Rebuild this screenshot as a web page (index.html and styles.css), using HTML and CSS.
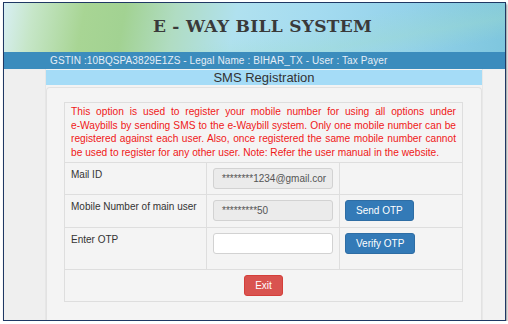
FILE: index.html
```html
<!DOCTYPE html>
<html>
<head>
<meta charset="utf-8">
<link rel="stylesheet" href="styles.css">
</head>
<body>
<div class="frame">
  <header class="banner">
    <h1 class="brand">E - WAY BILL SYSTEM</h1>
  </header>
  <div class="userbar">GSTIN :10BQSPA3829E1ZS - Legal Name : BIHAR_TX - User : Tax Payer</div>
  <div class="page">
    <div class="gutter"></div>
    <main class="content">
      <div class="title">SMS Registration</div>
      <div class="panel">
        <table class="form">
          <tr>
            <td colspan="3" class="notice">This option is used to register your mobile number for using all options under e-&#8288;Waybills by sending SMS to the e-&#8288;Waybill system. Only one mobile number can be registered against each user. Also, once registered the same mobile number cannot be used to register for any other user. Note: Refer the user manual in the website.</td>
          </tr>
          <tr class="r-mail">
            <td class="label">Mail ID</td>
            <td class="field"><div class="input ro">********1234@gmail.cor</div></td>
            <td class="act"></td>
          </tr>
          <tr class="r-mobile">
            <td class="label">Mobile Number of main user</td>
            <td class="field"><div class="input ro">*********50</div></td>
            <td class="act"><span class="btn blue">Send OTP</span></td>
          </tr>
          <tr class="r-otp">
            <td class="label">Enter OTP</td>
            <td class="field"><div class="input"></div></td>
            <td class="act"><span class="btn blue">Verify OTP</span></td>
          </tr>
          <tr class="r-exit">
            <td colspan="3" class="exitcell"><span class="btn red">Exit</span></td>
          </tr>
        </table>
      </div>
    </main>
    <div class="gutter-r"></div>
  </div>
</div>
</body>
</html>
```

FILE: styles.css
```css
* { box-sizing: border-box; }
html, body { margin: 0; padding: 0; background: #ffffff; }
body {
  padding: 2px 0 0 3px;
  font-family: "Liberation Sans", Arial, sans-serif;
}
.frame {
  width: 503px;
  height: 319px;
  border: 1px solid #1f3864;
  box-shadow: 1px 2px 2px rgba(0,0,0,0.45);
  display: flex;
  flex-direction: column;
  overflow: hidden;
  background: #f0f0f0;
}
.banner {
  height: 49px;
  flex: none;
  display: flex;
  align-items: center;
  justify-content: center;
  background:
    linear-gradient(170deg, rgba(255,255,255,0) 55%, rgba(160,220,200,0.35) 75%, rgba(255,255,255,0) 90%),
    linear-gradient(100deg, #d8eff4 0%, #c6e6c8 6%, #a8d594 16%, #a2d292 24%, #b0dcc2 34%, #b0e1ef 46%, #a4dbf0 62%, #94d2ea 80%, #7ec6de 100%);
}
.brand {
  margin: 0 0 4px 16px;
  font-family: "DejaVu Serif", "Liberation Serif", serif;
  font-size: 17px;
  font-weight: bold;
  letter-spacing: 0.3px;
  color: #3a3a3a;
}
.userbar {
  height: 17px;
  flex: none;
  background: #3b8cbd;
  color: #e6eef6;
  font-size: 10px;
  line-height: 17px;
  padding-left: 46px;
  letter-spacing: 0.1px;
}
.page {
  flex: 1;
  display: flex;
}
.gutter { width: 42px; flex: none; background: #efefef; border-right: 1px solid #e6e6e6; }
.gutter-r { flex: 1; background: #f2f2f2; border-left: 1px solid #e8e8e8; }
.content {
  width: 436px;
  flex: none;
  background: #f3f3f3;
  padding-top: 1px;
}
.title {
  height: 15px;
  background: #a5dcf7;
  color: #333;
  font-size: 13px;
  line-height: 15px;
  text-align: center;
}
.panel {
  margin-top: 2px;
  height: 240px;
  border: 1px solid #e2e2e2;
  border-bottom: none;
  border-radius: 4px 4px 0 0;
  background: #f4f4f4;
  padding: 14px 17px 0 17px;
}
.form {
  width: 399px;
  border-collapse: collapse;
  font-size: 10px;
  color: #333;
}
.form td {
  border: 1px solid #dedede;
  vertical-align: top;
  padding: 0;
}
.notice {
  color: #f01818;
  text-align: justify;
  padding: 2px 6px 3px 6px !important;
  font-size: 10.2px;
  line-height: 13.5px;
}
.label { width: 142px; padding: 6px 6px 0 6px !important; line-height: 12px; }
.field { width: 132px; padding: 5px 6px 0 6px !important; }
.act { padding: 5px 5px 0 5px !important; }
.r-mail td { height: 32px; }
.r-mobile td { height: 33px; }
.r-otp td { height: 42px; }
.input {
  width: 120px;
  height: 21px;
  border: 1px solid #d2d2d2;
  border-radius: 3px;
  background: #ffffff;
  color: #555;
  font-size: 10px;
  line-height: 19px;
  padding-left: 8px;
  white-space: nowrap;
  overflow: hidden;
}
.input.ro { background: #ebebeb; }
.btn {
  display: inline-block;
  height: 21px;
  line-height: 21px;
  padding: 0 10px;
  border-radius: 3px;
  color: #fff;
  font-size: 10px;
}
.blue { background: #337ab7; border: 1px solid #2e6da4; line-height: 19px; }
.red { background: #d9534f; border: 1px solid #d43f3a; line-height: 19px; }
.exitcell {
  height: 32px;
  text-align: center;
  padding-top: 5px !important;
}
```
